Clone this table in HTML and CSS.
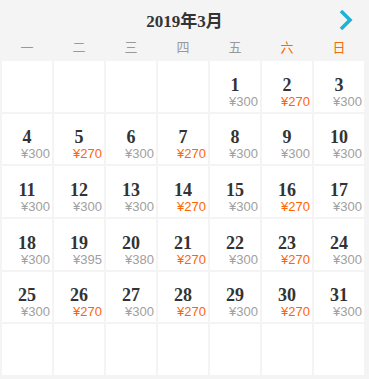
FILE: index.html
```html
<!DOCTYPE html>
<html lang="zh">
<head>
<meta charset="utf-8">
<link rel="stylesheet" href="styles.css">
</head>
<body>
<div class="cal">
  <div class="head">
    <span></span>
    <h1 class="title">2019年3月</h1>
    <button class="next" aria-label="下个月">
      <svg width="14" height="22" viewBox="0 0 14 22"><path d="M2 2 L11 11 L2 20" fill="none" stroke="#1fb1d6" stroke-width="3.6"/></svg>
    </button>
  </div>
  <div class="week">
    <span>一</span><span>二</span><span>三</span><span>四</span><span>五</span><span class="we">六</span><span class="we">日</span>
  </div>
  <div class="grid">
    <div class="cell"></div><div class="cell"></div><div class="cell"></div><div class="cell"></div>
    <div class="cell"><b>1</b><i>¥300</i></div>
    <div class="cell"><b>2</b><i class="low">¥270</i></div>
    <div class="cell"><b>3</b><i>¥300</i></div>
    <div class="cell"><b>4</b><i>¥300</i></div>
    <div class="cell"><b>5</b><i class="low">¥270</i></div>
    <div class="cell"><b>6</b><i>¥300</i></div>
    <div class="cell"><b>7</b><i class="low">¥270</i></div>
    <div class="cell"><b>8</b><i>¥300</i></div>
    <div class="cell"><b>9</b><i>¥300</i></div>
    <div class="cell"><b>10</b><i>¥300</i></div>
    <div class="cell"><b>11</b><i>¥300</i></div>
    <div class="cell"><b>12</b><i>¥300</i></div>
    <div class="cell"><b>13</b><i>¥300</i></div>
    <div class="cell"><b>14</b><i class="low">¥270</i></div>
    <div class="cell"><b>15</b><i>¥300</i></div>
    <div class="cell"><b>16</b><i class="low">¥270</i></div>
    <div class="cell"><b>17</b><i>¥300</i></div>
    <div class="cell"><b>18</b><i>¥300</i></div>
    <div class="cell"><b>19</b><i>¥395</i></div>
    <div class="cell"><b>20</b><i>¥380</i></div>
    <div class="cell"><b>21</b><i class="low">¥270</i></div>
    <div class="cell"><b>22</b><i>¥300</i></div>
    <div class="cell"><b>23</b><i class="low">¥270</i></div>
    <div class="cell"><b>24</b><i>¥300</i></div>
    <div class="cell"><b>25</b><i>¥300</i></div>
    <div class="cell"><b>26</b><i class="low">¥270</i></div>
    <div class="cell"><b>27</b><i>¥300</i></div>
    <div class="cell"><b>28</b><i class="low">¥270</i></div>
    <div class="cell"><b>29</b><i>¥300</i></div>
    <div class="cell"><b>30</b><i class="low">¥270</i></div>
    <div class="cell"><b>31</b><i>¥300</i></div>
    <div class="cell"></div><div class="cell"></div><div class="cell"></div><div class="cell"></div>
    <div class="cell"></div><div class="cell"></div><div class="cell"></div>
  </div>
</div>
</body>
</html>
```
FILE: styles.css
```css
html, body {
  margin: 0;
  padding: 0;
  background: #f4f4f4;
}
.cal {
  width: 369px;
  font-family: "Liberation Sans", "Noto Sans CJK SC", sans-serif;
}
.head {
  display: grid;
  grid-template-columns: 1fr auto 1fr;
  align-items: center;
  height: 38px;
}
.title {
  margin: 0;
  font-family: "Liberation Serif", "Noto Sans CJK SC", serif;
  font-weight: bold;
  font-size: 17px;
  color: #333;
}
.next {
  justify-self: end;
  margin-right: 16px;
  border: 0;
  padding: 0;
  background: none;
  display: flex;
  margin-top: 1px;
}
.week {
  display: grid;
  grid-template-columns: repeat(7, 50px);
  column-gap: 2px;
  padding-left: 2px;
  height: 20px;
  line-height: 18px;
  font-family: "Noto Sans CJK SC", sans-serif;
  font-size: 13px;
  color: #999;
  text-align: center;
}
.week .we {
  color: #ff6600;
}
.grid {
  margin-top: 3px;
  padding-left: 2px;
  display: grid;
  grid-template-columns: repeat(7, 50px);
  grid-template-rows: repeat(6, 1fr);
  gap: 2px;
  height: 314px;
}
.cell {
  background: #fff;
  display: flex;
  flex-direction: column;
  justify-content: flex-end;
  padding-bottom: 3px;
  box-sizing: border-box;
}
.cell b {
  font-family: "Liberation Serif", serif;
  font-weight: bold;
  font-size: 18px;
  line-height: 18px;
  color: #333;
  text-align: center;
}
.cell i {
  font-style: normal;
  font-size: 13px;
  line-height: 15px;
  color: #a0a0a0;
  text-align: right;
  padding-right: 2px;
}
.cell i.low {
  color: #ff6600;
}
```
